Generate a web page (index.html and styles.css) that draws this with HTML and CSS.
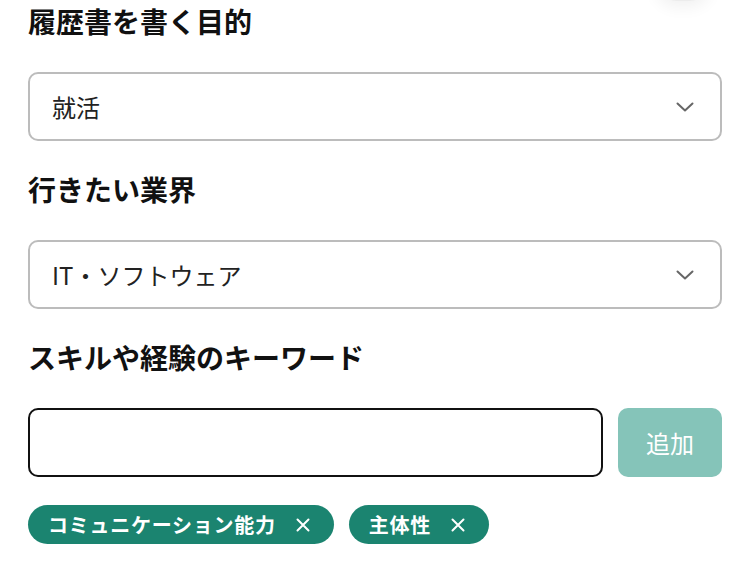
FILE: index.html
```html
<!DOCTYPE html>
<html lang="ja">
<head>
<meta charset="utf-8">
<link rel="stylesheet" href="styles.css">
</head>
<body>
<div class="floating"></div>
<main class="form">
  <section class="field">
    <h2 class="label">履歴書を書く目的</h2>
    <div class="select">
      <span class="select-value">就活</span>
      <svg class="chevron" width="18" height="10" viewBox="0 0 18 10"><path d="M1.5 1.5 L9 8.5 L16.5 1.5" fill="none" stroke="#666" stroke-width="2" stroke-linecap="round" stroke-linejoin="round"/></svg>
    </div>
  </section>
  <section class="field">
    <h2 class="label">行きたい業界</h2>
    <div class="select">
      <span class="select-value">IT・ソフトウェア</span>
      <svg class="chevron" width="18" height="10" viewBox="0 0 18 10"><path d="M1.5 1.5 L9 8.5 L16.5 1.5" fill="none" stroke="#666" stroke-width="2" stroke-linecap="round" stroke-linejoin="round"/></svg>
    </div>
  </section>
  <section class="field">
    <h2 class="label">スキルや経験のキーワード</h2>
    <div class="keyword-row">
      <div class="text-input"></div>
      <button class="add-btn">追加</button>
    </div>
    <div class="tags">
      <span class="tag">コミュニケーション能力<svg class="tag-x" width="14" height="14" viewBox="0 0 14 14"><path d="M1.5 1.5 L12.5 12.5 M12.5 1.5 L1.5 12.5" stroke="#fff" stroke-width="2" stroke-linecap="round"/></svg></span>
      <span class="tag">主体性<svg class="tag-x" width="14" height="14" viewBox="0 0 14 14"><path d="M1.5 1.5 L12.5 12.5 M12.5 1.5 L1.5 12.5" stroke="#fff" stroke-width="2" stroke-linecap="round"/></svg></span>
    </div>
  </section>
</main>
</body>
</html>
```
FILE: styles.css
```css
* { box-sizing: border-box; }
html, body { margin: 0; padding: 0; background: #fff; }
body {
  font-family: "Noto Sans CJK JP", "Noto Sans", sans-serif;
  color: #1a1a1a;
  width: 750px;
  height: 572px;
  overflow: hidden;
  position: relative;
}
.floating {
  position: absolute;
  top: -44px;
  left: 655px;
  width: 56px;
  height: 45px;
  border-radius: 22px;
  background: #fff;
  border: 1px solid #ececec;
  box-shadow: 0 6px 16px rgba(0,0,0,0.06);
}
.form {
  padding: 3px 28px 0 28px;
  display: flex;
  flex-direction: column;
  gap: 30px;
}
.field {
  display: flex;
  flex-direction: column;
}
.label {
  margin: 0 0 33px 0;
  font-size: 28px;
  line-height: 36px;
  font-weight: 700;
  color: #111;
}
.select {
  height: 69px;
  border: 2px solid #bcbcbc;
  border-radius: 10px;
  display: flex;
  align-items: center;
  justify-content: space-between;
  padding: 0 26px 0 22px;
}
.select-value {
  font-size: 24px;
  color: #222;
}
.chevron { display: block; }
.keyword-row {
  display: flex;
  gap: 15px;
  height: 69px;
}
.text-input {
  flex: 1;
  border: 2px solid #111;
  border-radius: 10px;
}
.add-btn {
  width: 104px;
  border: none;
  border-radius: 10px;
  background: #85c4b9;
  color: #fff;
  font-family: inherit;
  font-size: 24px;
  padding: 0;
}
.tags {
  margin-top: 28px;
  display: flex;
  gap: 15px;
}
.tag {
  height: 39px;
  border-radius: 20px;
  background: #1b8470;
  color: #fff;
  font-size: 20px;
  font-weight: 700;
  display: inline-flex;
  align-items: center;
  padding: 0 24px 0 20px;
  letter-spacing: 0.75px;
}
.tag-x {
  margin-left: 20px;
  display: block;
}
```
